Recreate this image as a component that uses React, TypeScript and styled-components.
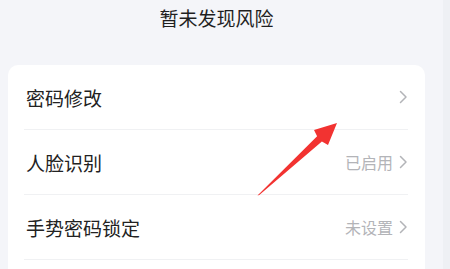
import React, { FC } from 'react';
import styled, { createGlobalStyle } from 'styled-components';

const GlobalStyle = createGlobalStyle`
  html, body {
    margin: 0;
    padding: 0;
    background: #f4f5f9;
    font-family: "Noto Sans CJK SC", "Noto Sans", sans-serif;
    overflow: hidden;
  }
`;

const Page = styled.div`
  position: relative;
  display: flex;
  width: 450px;
  height: 269px;
  overflow: hidden;
`;

const Main = styled.div`
  display: flex;
  flex-direction: column;
  width: 443px;
`;

const Strip = styled.div`
  width: 7px;
  background: #eef0f4;
`;

const Title = styled.div`
  flex-shrink: 0;
  height: 65px;
  padding-left: 8px;
  padding-right: 18px;
  padding-top: 6px;
  box-sizing: border-box;
  text-align: center;
  font-size: 19px;
  line-height: 24px;
  color: #1f1f1f;
`;

const Card = styled.div`
  flex-shrink: 0;
  margin: 0 18px 0 8px;
  background: #ffffff;
  border-radius: 10px;
  padding: 0 17px 30px 16px;
`;

const Row = styled.div`
  display: flex;
  align-items: center;
  justify-content: space-between;
  height: 65px;
  box-sizing: border-box;
  border-bottom: 1px solid #f0f1f3;
`;

const Label = styled.span`
  padding-left: 2px;
  font-size: 19px;
  color: #222222;
`;

const Value = styled.span`
  display: flex;
  align-items: center;
  gap: 5px;
  font-size: 16px;
  color: #b3b4b8;
`;

const Overlay = styled.svg`
  position: absolute;
  left: 0;
  top: 0;
  pointer-events: none;
`;

const Chevron: FC = () => (
  <svg width="10" height="14" viewBox="0 0 10 14">
    <path d="M2.5 1.5 L8 7 L2.5 12.5" fill="none" stroke="#b3b4b8" strokeWidth="1.5" strokeLinecap="round" strokeLinejoin="round" />
  </svg>
);

const items = [
  { label: '密码修改', value: '' },
  { label: '人脸识别', value: '已启用' },
  { label: '手势密码锁定', value: '未设置' },
];

export default function App() {
  return (
    <Page>
      <GlobalStyle />
      <Main>
        <Title>暂未发现风险</Title>
        <Card>
          {items.map((item) => (
            <Row key={item.label}>
              <Label>{item.label}</Label>
              <Value>
                {item.value}
                <Chevron />
              </Value>
            </Row>
          ))}
        </Card>
      </Main>
      <Strip />
      <Overlay width="450" height="269" viewBox="0 0 450 269">
        <polygon
          points="257.5,195.5 259.3,195 321.9,141.4 328,145 337,123 314,130 317.1,136.2"
          fill="#f23331"
        />
      </Overlay>
    </Page>
  );
}
